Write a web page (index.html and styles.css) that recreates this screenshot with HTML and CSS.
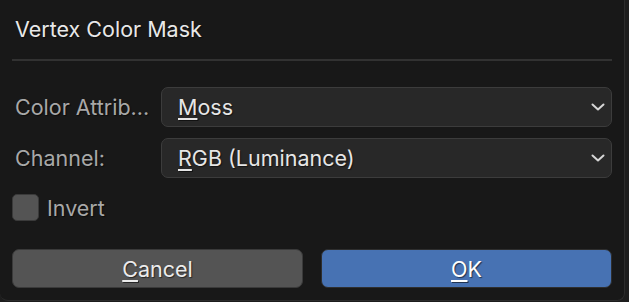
FILE: index.html
```html
<!DOCTYPE html>
<html>
<head>
<meta charset="utf-8">
<link rel="stylesheet" href="styles.css">
</head>
<body>
<div class="dialog">
  <div class="title">Vertex Color Mask</div>
  <div class="sep"></div>
  <div class="form">
    <div class="row">
      <div class="label">Color Attrib...</div>
      <div class="select"><span><u>M</u>oss</span>
        <svg class="chev" width="14" height="8" viewBox="0 0 14 8"><path d="M1.5 1.5 L7 6.5 L12.5 1.5" fill="none" stroke="#d6d6d6" stroke-width="2" stroke-linecap="round" stroke-linejoin="round"/></svg>
      </div>
    </div>
    <div class="row">
      <div class="label">Channel:</div>
      <div class="select"><span><u>R</u>GB (Luminance)</span>
        <svg class="chev" width="14" height="8" viewBox="0 0 14 8"><path d="M1.5 1.5 L7 6.5 L12.5 1.5" fill="none" stroke="#d6d6d6" stroke-width="2" stroke-linecap="round" stroke-linejoin="round"/></svg>
      </div>
    </div>
    <div class="check-row">
      <div class="checkbox"></div>
      <div class="check-label">Invert</div>
    </div>
  </div>
  <div class="buttons">
    <div class="btn cancel"><span><u>C</u>ancel</span></div>
    <div class="btn ok"><span><u>O</u>K</span></div>
  </div>
</div>
</body>
</html>
```
FILE: styles.css
```css
html, body {
  margin: 0;
  padding: 0;
  background: #1d1d1d;
  width: 629px;
  height: 302px;
  overflow: hidden;
}
.dialog {
  box-sizing: border-box;
  width: 625px;
  height: 301px;
  background: #181818;
  border-right: 1px solid #2c2c2c;
  border-bottom: 1px solid #2c2c2c;
  border-radius: 0 0 8px 8px;
  padding: 0 12px 0 12px;
  display: flex;
  flex-direction: column;
  font-family: Inter, "Noto Sans", sans-serif;
  font-size: 21.5px;
  text-shadow: 1px 1px 1px rgba(0, 0, 0, 0.55);
}
.title {
  height: 59px;
  display: flex;
  align-items: center;
  padding-left: 3px;
  color: #e8e8e8;
  padding-bottom: 1px;
  box-sizing: border-box;
}
.sep {
  height: 2px;
  background: #323232;
}
.form {
  margin-top: 26px;
  display: flex;
  flex-direction: column;
  gap: 11px;
}
.row {
  display: grid;
  grid-template-columns: 149px 1fr;
  height: 40px;
}
.label {
  display: flex;
  align-items: center;
  padding-left: 3px;
  color: #a8a8a8;
}
.select {
  box-sizing: border-box;
  background: #282828;
  border: 1px solid #3c3c3c;
  border-radius: 7px;
  display: flex;
  align-items: center;
  justify-content: space-between;
  padding: 0 6px 0 16px;
  color: #e6e6e6;
}
u {
  text-decoration-thickness: 2px;
  text-underline-offset: 3px;
}
.check-row {
  margin-top: 5px;
  display: flex;
  align-items: center;
  gap: 8px;
  height: 27px;
}
.checkbox {
  box-sizing: border-box;
  width: 27px;
  height: 27px;
  background: #545454;
  border: 1px solid #3a3a3a;
  border-radius: 5px;
}
.check-label {
  color: #a8a8a8;
}
.buttons {
  margin-top: 28px;
  display: flex;
  gap: 18px;
}
.btn {
  box-sizing: border-box;
  flex: 1;
  height: 39px;
  border-radius: 7px;
  border: 1px solid #3a3a3a;
  display: flex;
  align-items: center;
  justify-content: center;
  color: #ececec;
}
.cancel {
  background: #545454;
}
.ok {
  background: #4772b3;
  border-color: #2e2e2e;
  color: #ffffff;
}
```
